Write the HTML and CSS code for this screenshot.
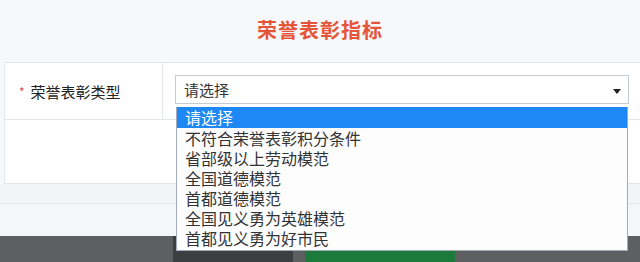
FILE: index.html
```html
<!DOCTYPE html>
<html lang="zh-CN">
<head>
    <meta charset="UTF-8">
    <title>荣誉表彰指标</title>
    <link rel="stylesheet" href="styles.css">
</head>
<body>
    <div class="panel">
        <h2 class="title">荣誉表彰指标</h2>
        <div class="form">
            <div class="row">
                <div class="label"><span class="req">*</span>荣誉表彰类型</div>
                <div class="field">
                    <div class="select">
                        <span>请选择</span>
                        <span class="arrow"></span>
                    </div>
                </div>
            </div>
            <div class="blank"></div>
        </div>
        <div class="band"></div>
        <div class="rest"></div>
        <div class="footer">
            <span class="btn btn-dark"></span>
            <span class="btn btn-green"></span>
        </div>
        <ul class="dropdown">
            <li class="active">请选择</li>
            <li>不符合荣誉表彰积分条件</li>
            <li>省部级以上劳动模范</li>
            <li>全国道德模范</li>
            <li>首都道德模范</li>
            <li>全国见义勇为英雄模范</li>
            <li>首都见义勇为好市民</li>
        </ul>
    </div>
</body>
</html>
```

FILE: styles.css
```css
body {
    margin: 0;
    width: 640px;
    height: 262px;
    overflow: hidden;
    background-color: #f7f8fa;
    font-family: "Noto Sans CJK SC", "Noto Sans", sans-serif;
    color: #333;
}
.panel {
    position: relative;
    height: 262px;
    overflow: hidden;
}
.title {
    margin: 0;
    height: 62px;
    line-height: 60px;
    text-align: center;
    font-size: 20px;
    font-weight: 700;
    color: #e5553a;
    letter-spacing: 1px;
}
.form {
    margin-left: 4px;
    border: 1px solid #e3e7eb;
    border-right: none;
    background-color: #fff;
}
.row {
    display: grid;
    grid-template-columns: 158px 1fr;
    height: 56px;
    border-bottom: 1px solid #e3e7eb;
}
.label {
    display: flex;
    align-items: center;
    padding-left: 14px;
    font-size: 15px;
    color: #222;
    border-right: 1px solid #e3e7eb;
}
.req {
    color: #e0475a;
    font-size: 12px;
    margin-right: 6px;
}
.field {
    padding: 12px 10px 0 12px;
}
.select {
    display: flex;
    align-items: center;
    justify-content: space-between;
    box-sizing: border-box;
    width: 454px;
    height: 29px;
    padding: 0 7px 0 8px;
    border: 1px solid #c6ccd5;
    background-color: #fff;
    font-size: 15px;
}
.arrow {
    width: 0;
    height: 0;
    margin-top: 3px;
    border-left: 4px solid transparent;
    border-right: 4px solid transparent;
    border-top: 5px solid #222;
}
.blank {
    height: 63px;
}
.band {
    height: 19px;
    border-bottom: 1px solid #e6e9ec;
    background-color: #f3f4f6;
}
.rest {
    height: 32px;
    background-color: #f5f6f8;
}
.footer {
    display: flex;
    height: 26px;
    overflow: hidden;
    background-color: #5e5f61;
    padding-left: 173px;
}
.btn {
    display: block;
    height: 30px;
}
.btn-dark {
    width: 120px;
    background-color: #3c3e42;
}
.btn-green {
    width: 150px;
    margin-left: 12px;
    margin-top: 12px;
    background-color: #1c7a3a;
    border-radius: 3px;
}
.dropdown {
    position: absolute;
    top: 107px;
    left: 176px;
    width: 452px;
    margin: 0;
    padding: 0 0 2px;
    list-style: none;
    box-sizing: border-box;
    border: 1px solid #a3abba;
    border-top: none;
    background-color: #fdfdfe;
    font-size: 16px;
}
.dropdown li {
    height: 20px;
    line-height: 20px;
    padding-left: 8px;
    white-space: nowrap;
}
.dropdown li.active {
    height: 21px;
    background-color: #1e88f5;
    color: #fff;
}
```
